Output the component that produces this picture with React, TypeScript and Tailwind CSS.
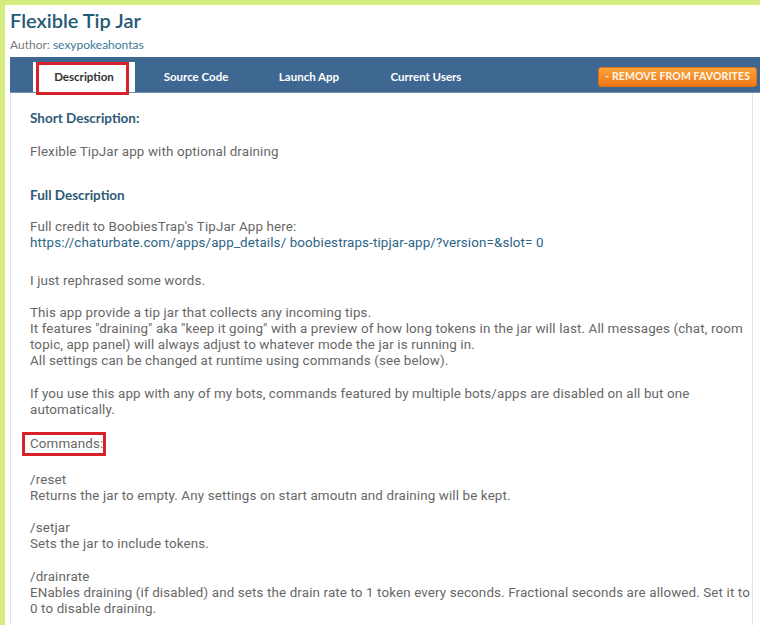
const tabs = [
  { label: 'Source Code', cls: 'ml-[5px]' },
  { label: 'Launch App', cls: 'ml-[1px]' },
  { label: 'Current Users', cls: 'ml-[5px]' },
];

const Line = ({ children }: { children: React.ReactNode }) => (
  <div className="whitespace-nowrap">{children}</div>
);

const App = () => {
  return (
    <div className="w-[760px] h-[625px] overflow-hidden bg-white border-t-[5px] border-l-[5px] border-[#d5ec80] font-['Lato','Noto_Sans',sans-serif]">
      <div className="pl-[5px]">
        <h1 className="text-[20px] leading-[28px] pt-[1px] font-semibold text-[#1f5a76]">Flexible Tip Jar</h1>
        <div className="mt-[4px] text-[12px] leading-[14px] text-[#7a7a7a]">
          Author: <span className="text-[#3a7893]">sexypokeahontas</span>
        </div>

        <nav className="mt-[5px] h-[36px] bg-[#3e6791] border-b border-[#6f8fb0] flex items-end text-[11.5px] font-bold text-white">
          <div className="relative ml-[23px] w-[102px] h-[30px] bg-white text-[#333] flex items-center justify-center">
            Description
            <div className="absolute left-[3px] top-0 w-[93px] h-[33px] border-[3px] border-[#d7212b]" />
          </div>
          {tabs.map((t) => (
            <div key={t.label} className={`${t.cls} w-[112px] h-[30px] flex items-center justify-center`}>
              {t.label}
            </div>
          ))}
          <div className="ml-auto mr-[3px] self-center mt-[4px] h-[20px] px-[6px] rounded-[3px] bg-gradient-to-b from-[#fca43a] to-[#ee7611] border border-[#e0700f] flex items-center text-[10.5px] text-[#fff7ec] tracking-[0.1px]">
            - REMOVE FROM FAVORITES
          </div>
        </nav>

        <div className="w-[743px] border-l border-r border-[#e2e2e2] pl-[19px] pt-[17px] pb-[40px] font-['Roboto',sans-serif] text-[13.4px] tracking-[0.12px] leading-[16px] text-[#676767]">
          <h2 className="font-['Lato',sans-serif] text-[13.5px] tracking-normal font-bold text-[#2e5a75]">Short Description:</h2>
          <p className="mt-[18px]">Flexible TipJar app with optional draining</p>

          <h2 className="mt-[27px] font-['Lato',sans-serif] text-[13.5px] tracking-normal font-bold text-[#2e5a75]">Full Description</h2>
          <div className="mt-[16px]">
            <Line>Full credit to BoobiesTrap's TipJar App here:</Line>
            <Line>
              <span className="text-[#2c6585]">https://chaturbate.com/apps/app_details/ boobiestraps-tipjar-app/?version=&amp;slot= 0</span>
            </Line>
          </div>

          <p className="mt-[22px]">I just rephrased some words.</p>

          <div className="mt-[16px]">
            <Line>This app provide a tip jar that collects any incoming tips.</Line>
            <Line>It features "draining" aka "keep it going" with a preview of how long tokens in the jar will last. All messages (chat, room</Line>
            <Line>topic, app panel) will always adjust to whatever mode the jar is running in.</Line>
            <Line>All settings can be changed at runtime using commands (see below).</Line>
          </div>

          <div className="mt-[17px]">
            <Line>If you use this app with any of my bots, commands featured by multiple bots/apps are disabled on all but one</Line>
            <Line>automatically.</Line>
          </div>

          <div className="relative mt-[18px] w-fit">
            Commands:
            <div className="absolute -left-[8px] -top-[4px] -right-[3px] h-[24px] border-[3px] border-[#d7212b]" />
          </div>

          <div className="mt-[20px]">
            <Line>/reset</Line>
            <Line>Returns the jar to empty. Any settings on start amoutn and draining will be kept.</Line>
          </div>

          <div className="mt-[16px]">
            <Line>/setjar</Line>
            <Line>Sets the jar to include tokens.</Line>
          </div>

          <div className="mt-[17px]">
            <Line>/drainrate</Line>
            <Line>ENables draining (if disabled) and sets the drain rate to 1 token every seconds. Fractional seconds are allowed. Set it to</Line>
            <Line>0 to disable draining.</Line>
          </div>
        </div>
      </div>
    </div>
  );
};

export default App;
